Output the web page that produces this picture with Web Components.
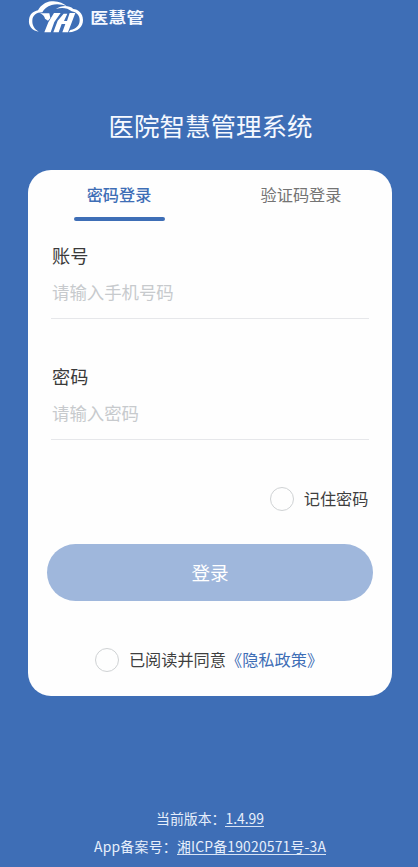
<!DOCTYPE html>
<html lang="zh-CN">
<head>
<meta charset="utf-8">
<title>医院智慧管理系统</title>
<style>
html,body{margin:0;height:100%;overflow:hidden;background:#3e6eb6}
body{font-family:"Noto Sans CJK SC","Noto Sans",sans-serif}
</style>
</head>
<body>
<login-page></login-page>
<script>
function define(name, html) {
  const t = document.createElement('template');
  t.innerHTML = html;
  customElements.define(name, class extends HTMLElement {
    constructor() {
      super();
      this.attachShadow({mode: 'open'}).append(t.content.cloneNode(true));
    }
  });
}

define('brand-logo', `
<style>
:host{display:block;width:140px;height:45px}
svg{display:block}
text{font-weight:700;font-size:46px;fill:#f4f8ff}
</style>
<svg width="140" height="45" viewBox="0 0 420 135">
  <g fill="#fff">
    <path d="M56 95C35 91 25 77 27 59C29 43 39 34 54 31C62 16 76 6 94 4C114 2 130 9 142 20C126 12 108 11 95 15C81 19 72 27 67 37C48 37 38 47 37 61C36 76 43 87 56 95Z"/>
    <path d="M108 27C124 16 146 15 160 27C173 27 189 39 189 60C189 80 174 95 146 97L151 90C169 87 179 76 179 60C179 46 170 37 155 34C143 24 126 21 108 27Z"/>
    <path d="M60 40H88L91 54L84 62L75 56Q73 46 60 40Z"/>
    <path d="M102 39H122L103 66L92 97H73L85 67Z"/>
    <path d="M131 41H142L132 63H141L149 39H166L144 97H127L136 72H125L116 97H100L113 62Z"/>
  </g>
  <text transform="translate(211 69) scale(1.17 1)">医慧管</text>
</svg>`);

define('login-tab', `
<style>
:host{display:flex;flex-direction:column;align-items:center;flex:1;font-size:16.2px;line-height:24px;color:#747474}
:host([active]){color:#3e6eb6;font-weight:500}
i{display:block;width:91px;height:4px;border-radius:2px;margin-top:11px}
:host([active]) i{background:#3e6eb6}
</style><span><slot></slot></span><i></i>`);

define('form-field', `
<style>
:host{display:block;height:77px;box-sizing:border-box;border-bottom:1.5px solid #e6e7ea}
.label,.hint{padding-left:1px}
.label{font-size:18.2px;line-height:26px;color:#3a3a3a}
.hint{font-size:17.4px;line-height:26px;margin-top:11px;color:#c7cacd}
</style>
<div class="label"><slot name="label"></slot></div>
<div class="hint"><slot></slot></div>`);

define('check-option', `
<style>
:host{display:flex;align-items:center;font-size:16.2px;line-height:24px;color:#3f3f3f}
i{box-sizing:border-box;width:24px;height:24px;border:1.4px solid #cfd2d4;border-radius:50%;margin-right:9.5px;position:relative;top:1px}
::slotted(a){color:#3e6eb6}
</style><i></i><span><slot></slot></span>`);

define('submit-button', `
<style>
:host{display:flex;align-items:center;justify-content:center;height:56.5px;border-radius:29px;background:#9fb7dc;color:#fff;font-size:18.6px;box-sizing:border-box;padding-bottom:1px}
</style><slot></slot>`);

define('login-card', `
<style>
:host{display:block;box-sizing:border-box;height:526px;border-radius:23px;background:#fefefe;padding:12.5px 0 0}
.tabs{display:flex}
.fields{padding:0 23.5px 0 23px;margin-top:20.5px;display:grid;gap:44.5px}
.remember{display:flex;justify-content:flex-end;padding-right:23.5px;margin-top:46px}
submit-button{margin:34px 19px 0}
.agree{display:flex;justify-content:center;margin-top:46px;padding-right:1.5px}
</style>
<div class="tabs"><login-tab active>密码登录</login-tab><login-tab>验证码登录</login-tab></div>
<div class="fields">
  <form-field><span slot="label">账号</span>请输入手机号码</form-field>
  <form-field><span slot="label">密码</span>请输入密码</form-field>
</div>
<div class="remember"><check-option>记住密码</check-option></div>
<submit-button>登录</submit-button>
<div class="agree"><check-option>已阅读并同意<a>《隐私政策》</a></check-option></div>`);

define('app-footer', `
<style>
:host{display:flex;flex-direction:column;align-items:center;color:#e6eefb;font-size:13.9px;line-height:28px}
u{text-decoration:none;display:inline-block;line-height:15px;border-bottom:1px solid #d8e3f5}
.record{letter-spacing:.25px}
.icp{letter-spacing:.18px}
</style>
<div>当前版本：<u>1.4.99</u></div>
<div class="record">App备案号：<u class="icp">湘ICP备19020571号-3A</u></div>`);

define('login-page', `
<style>
:host{display:flex;flex-direction:column;box-sizing:border-box;width:418px;height:867px;background:#3e6eb6}
brand-logo{margin-left:20px}
h1{margin:61.5px 0 0;padding-left:3px;text-align:center;font-size:25.5px;font-weight:400;line-height:36px;color:#f6f9ff}
login-card{margin:27px 26px 0 28px}
app-footer{margin-top:108px;padding-left:2px}
</style>
<brand-logo></brand-logo>
<h1>医院智慧管理系统</h1>
<login-card></login-card>
<app-footer></app-footer>`);
</script>
</body>
</html>
